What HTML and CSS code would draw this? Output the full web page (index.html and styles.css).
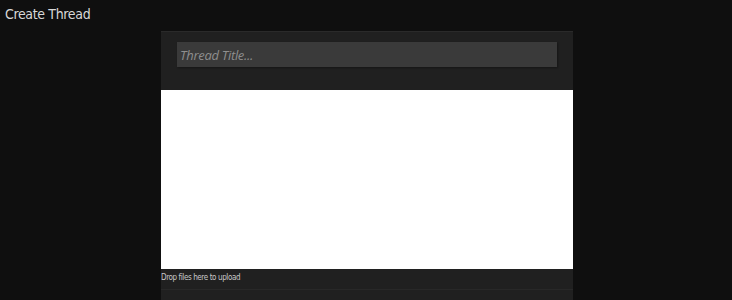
FILE: index.html
```html
<!DOCTYPE html>
<html>
<head>
<meta charset="utf-8">
<link rel="stylesheet" href="styles.css">
</head>
<body>
<h1 class="page-title">Create Thread</h1>
<div class="panel">
  <div class="panel-head">
    <input class="title-input" type="text" placeholder="Thread Title...">
  </div>
  <div class="editor"></div>
  <div class="upload">Drop files here to upload</div>
  <div class="panel-foot"></div>
</div>
</body>
</html>
```
FILE: styles.css
```css
html, body {
  margin: 0;
  padding: 0;
  background: #0f0f0f;
  height: 100%;
  overflow: hidden;
}
body {
  font-family: "Open Sans", "DejaVu Sans", sans-serif;
}
.page-title {
  margin: 0;
  padding: 4px 0 0 5px;
  height: 27px;
  box-sizing: border-box;
  font-family: "DejaVu Sans", sans-serif;
  font-stretch: condensed;
  font-size: 14px;
  font-weight: 400;
  color: #d8d8d8;
  letter-spacing: -0.35px;
  line-height: 20px;
}
.panel {
  margin: 4px 0 0 161px;
  width: 412px;
  background: #202020;
  border-top: 1px solid #2a2a2a;
}
.panel-head {
  padding: 10px 16px 23px 16px;
}
.title-input {
  display: block;
  box-sizing: border-box;
  width: 380px;
  height: 25px;
  margin: 0;
  border: none;
  outline: none;
  background: #3a3a3a;
  box-shadow: 1px 1px 2px rgba(0,0,0,0.35);
  padding: 0 3px;
  font-family: "Open Sans", "DejaVu Sans", sans-serif;
  font-style: italic;
  font-size: 13px;
  color: #ccc;
}
.title-input::placeholder {
  color: #8e8e8e;
  letter-spacing: -0.3px;
}
.editor {
  height: 179px;
  background: #ffffff;
}
.upload {
  padding: 3px 0 0 0;
  height: 17px;
  font-family: "DejaVu Sans", sans-serif;
  font-stretch: condensed;
  font-size: 8px;
  line-height: 12px;
  color: #c8c8c8;
  letter-spacing: -0.4px;
}
.panel-foot {
  height: 20px;
  border-top: 1px solid #282828;
}
```
